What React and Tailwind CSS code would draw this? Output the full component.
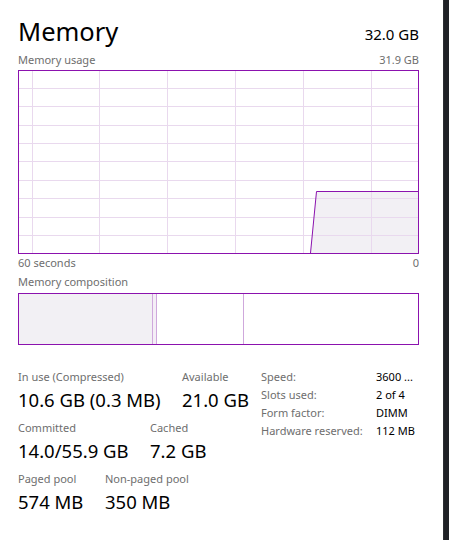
import React from "react";

const PURPLE = "#8b12ae";

function UsageGraph() {
  const W = 399;
  const H = 182;
  const vx = [13, 80, 148, 216, 284, 352];
  const hy = [17, 35, 54, 72, 90, 109, 127, 146, 164];
  return (
    <svg width={W} height={H} viewBox={`0 0 ${W} ${H}`} className="block">
      <rect x="0" y="0" width={W} height={H} fill="#ffffff" />
      <polygon points={`291.5,${H} 297.5,120.5 ${W},120.5 ${W},${H}`} fill="#f2f0f4" />
      {vx.map((x) => (
        <line key={"v" + x} x1={x + 0.5} y1="0" x2={x + 0.5} y2={H} stroke="#e9d9ee" strokeWidth="1" />
      ))}
      {hy.map((y) => (
        <line key={"h" + y} x1="0" y1={y + 0.5} x2={W} y2={y + 0.5} stroke="#e9d9ee" strokeWidth="1" />
      ))}
      <polyline points={`291.5,${H} 297.5,120.5 ${W},120.5`} fill="none" stroke={PURPLE} strokeWidth="1" />
    </svg>
  );
}

function Stat({ label, value, w }) {
  return (
    <div className={w}>
      <div className="h-[18px] leading-[18px] text-[11px] text-[#6e6e6e]">{label}</div>
      <div className="h-[28px] leading-[28px] text-[18.5px] text-black">{value}</div>
    </div>
  );
}

export default function App() {
  return (
    <div
      className="w-[449px] h-[540px] bg-white flex overflow-hidden"
      style={{ fontFamily: '"Segoe UI", "Noto Sans", "Open Sans", sans-serif' }}
    >
      <div className="w-[443px] pl-[18px] pr-[24px] flex flex-col">
        <div className="mt-[12px] h-[38px] flex justify-between items-end">
          <div className="text-[25.5px] leading-[38px] text-black">Memory</div>
          <div className="text-[15px] leading-[24px] mb-[4px] text-black">32.0 GB</div>
        </div>
        <div className="h-[20px] flex justify-between items-center text-[11px] text-[#6e6e6e]">
          <span>Memory usage</span>
          <span>31.9 GB</span>
        </div>
        <div className="w-[401px] h-[184px] border border-[#8b12ae]">
          <UsageGraph />
        </div>
        <div className="h-[18px] flex justify-between items-center text-[11px] text-[#6e6e6e]">
          <span>60 seconds</span>
          <span>0</span>
        </div>
        <div className="h-[21px] flex items-center text-[11px] text-[#6e6e6e]">
          <span>Memory composition</span>
        </div>
        <div className="w-[401px] h-[52px] border border-[#8b12ae] flex">
          <div className="w-[133px] bg-[#f2f0f4]" />
          <div className="w-[5px] bg-[#f4eef6] border-x border-[#cfa8dc]" />
          <div className="w-[86px]" />
          <div className="w-[1px] bg-[#cfa8dc]" />
          <div className="flex-1" />
        </div>
        <div className="mt-[23px] flex">
          <div className="w-[243px] flex flex-col gap-[5px]">
            <div className="flex">
              <Stat w="w-[164px]" label="In use (Compressed)" value="10.6 GB (0.3 MB)" />
              <Stat w="" label="Available" value="21.0 GB" />
            </div>
            <div className="flex">
              <Stat w="w-[132px]" label="Committed" value="14.0/55.9 GB" />
              <Stat w="" label="Cached" value="7.2 GB" />
            </div>
            <div className="flex">
              <Stat w="w-[87px]" label="Paged pool" value="574 MB" />
              <Stat w="" label="Non-paged pool" value="350 MB" />
            </div>
          </div>
          <div className="flex flex-col text-[11px]">
            {[
              ["Speed:", "3600 ..."],
              ["Slots used:", "2 of 4"],
              ["Form factor:", "DIMM"],
              ["Hardware reserved:", "112 MB"],
            ].map(([k, v]) => (
              <div key={k} className="flex h-[18px] leading-[18px]">
                <span className="w-[115px] text-[#6e6e6e]">{k}</span>
                <span className="text-black">{v}</span>
              </div>
            ))}
          </div>
        </div>
      </div>
      <div className="w-[6px] h-full bg-[#1f2226] border-l border-[#2c2f33]" />
    </div>
  );
}
